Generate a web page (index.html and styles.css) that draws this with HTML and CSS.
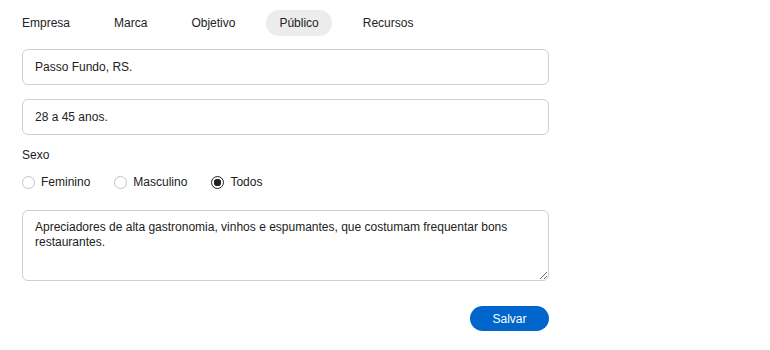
FILE: index.html
```html
<!doctype html>
<html>
  <head>
    <meta charset="utf-8">
    <title>Público</title>
    <link rel="stylesheet" href="styles.css">
  </head>
  <body>
    <div class="page">
      <nav class="tabs">
        <a class="tab">Empresa</a>
        <a class="tab">Marca</a>
        <a class="tab">Objetivo</a>
        <a class="tab active">Público</a>
        <a class="tab">Recursos</a>
      </nav>
      <form class="form">
        <input class="field" type="text" value="Passo Fundo, RS.">
        <input class="field" type="text" value="28 a 45 anos.">
        <div class="label">Sexo</div>
        <div class="radios">
          <label class="radio"><input type="radio" name="sexo"> Feminino</label>
          <label class="radio"><input type="radio" name="sexo"> Masculino</label>
          <label class="radio"><input type="radio" name="sexo" checked> Todos</label>
        </div>
        <textarea class="area">Apreciadores de alta gastronomia, vinhos e espumantes, que costumam frequentar bons restaurantes.</textarea>
        <div class="actions">
          <button type="button" class="save-btn">Salvar</button>
        </div>
      </form>
    </div>
  </body>
</html>
```

FILE: styles.css
```css
body {
  margin: 0;
  font-family: "Liberation Sans", Arial, sans-serif;
  font-size: 12px;
  color: #222;
  background: #fff;
}
.page {
  width: 527px;
  padding: 10px 22px;
}
.tabs {
  display: flex;
  gap: 18px;
  margin-left: -13px;
}
.tab {
  height: 26px;
  line-height: 26px;
  padding: 0 13px;
  border-radius: 13px;
  font-size: 12px;
}
.tab.active {
  background: #ececec;
}
.form {
  display: flex;
  flex-direction: column;
  margin-top: 13px;
}
.field {
  box-sizing: border-box;
  height: 36px;
  margin: 0 0 14px;
  padding: 0 12px;
  border: 1px solid #cfcfcf;
  border-radius: 6px;
  font: inherit;
  color: #222;
}
.label {
  line-height: 14px;
  margin-top: -1px;
}
.radios {
  display: flex;
  gap: 24px;
  margin-top: 13px;
  line-height: 14px;
}
.radio {
  display: flex;
  align-items: center;
  gap: 6px;
}
.radio input {
  appearance: none;
  box-sizing: border-box;
  width: 13px;
  height: 13px;
  margin: 0;
  border: 1px solid #c4c4c4;
  border-radius: 50%;
}
.radio input:checked {
  border-color: #222;
  background: radial-gradient(circle, #222 0 3.5px, #fff 4px);
}
.area {
  box-sizing: border-box;
  height: 71px;
  margin-top: 21px;
  padding: 9px 12px 7px;
  border: 1px solid #cfcfcf;
  border-radius: 6px;
  font: inherit;
  line-height: 15px;
  color: #222;
  resize: vertical;
}
.actions {
  display: flex;
  justify-content: flex-end;
  margin-top: 25px;
}
.save-btn {
  width: 79px;
  height: 25px;
  border: none;
  border-radius: 13px;
  background: #0066cc;
  color: #fff;
  font: inherit;
}
```
